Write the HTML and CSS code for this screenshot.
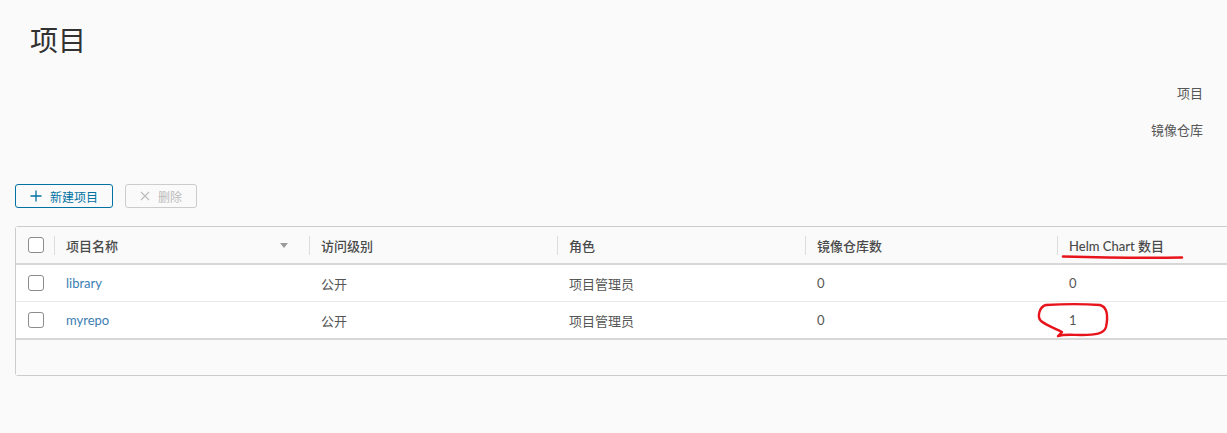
FILE: index.html
```html
<!DOCTYPE html>
<html lang="zh-CN">
<head>
<meta charset="utf-8">
<title>项目</title>
<link rel="stylesheet" href="styles.css">
</head>
<body>
<div class="page">
  <h1 class="title">项目</h1>
  <div class="side-links">
    <span class="side-link">项目</span>
    <span class="side-link">镜像仓库</span>
  </div>
  <div class="toolbar">
    <button class="btn btn-primary">
      <svg class="btn-icon" width="12" height="12" viewBox="0 0 12 12"><path d="M6 0.5V11.5M0.5 6H11.5" stroke="#0072a3" stroke-width="1.3" fill="none"/></svg>
      新建项目
    </button>
    <button class="btn btn-disabled">
      <svg class="btn-icon" width="10" height="10" viewBox="0 0 10 10"><path d="M1 1L9 9M9 1L1 9" stroke="#bbb" stroke-width="1.1" fill="none"/></svg>
      删除
    </button>
  </div>
  <div class="grid-clip">
    <div class="datagrid">
      <div class="row head">
        <div class="cell chk"><span class="checkbox"></span></div>
        <div class="cell hcell sep">项目名称<span class="filter"></span></div>
        <div class="cell hcell sep">访问级别</div>
        <div class="cell hcell sep">角色</div>
        <div class="cell hcell sep">镜像仓库数</div>
        <div class="cell hcell sep">Helm Chart 数目</div>
      </div>
      <div class="row">
        <div class="cell chk"><span class="checkbox"></span></div>
        <div class="cell"><a class="link">library</a></div>
        <div class="cell">公开</div>
        <div class="cell">项目管理员</div>
        <div class="cell">0</div>
        <div class="cell">0</div>
      </div>
      <div class="row last">
        <div class="cell chk"><span class="checkbox"></span></div>
        <div class="cell"><a class="link">myrepo</a></div>
        <div class="cell">公开</div>
        <div class="cell">项目管理员</div>
        <div class="cell">0</div>
        <div class="cell">1</div>
      </div>
      <div class="footer"></div>
    </div>
  </div>
</div>
<svg class="marks" width="1227" height="433" viewBox="0 0 1227 433">
  <path d="M1063 256.5 C1100 257.5 1150 258 1182 257.5" stroke="#e8141b" stroke-width="2.6" fill="none" stroke-linecap="round"/>
  <path d="M1046 305 C1062 304 1086 304 1100 305 C1108 307 1108 318 1106 327 C1104 334 1095 335 1082 335 C1072 335 1064 334 1058 336 L1062 332 C1056 329 1046 325 1041 321 C1037 317 1039 307 1046 305 Z" stroke="#e8141b" stroke-width="2.4" fill="none" stroke-linejoin="round"/>
</svg>
</body>
</html>
```
FILE: styles.css
```css
html, body {
  margin: 0;
  padding: 0;
  background: #fafafa;
  overflow: hidden;
  width: 1227px;
  height: 433px;
}
body {
  font-family: "Lato", "Noto Sans CJK SC", sans-serif;
  color: #565656;
  position: relative;
}
.page {
  padding: 0 0 0 15px;
}
.title {
  margin: 0;
  padding: 21px 0 0 15px;
  font-size: 28px;
  line-height: 38px;
  font-weight: 400;
  color: #313131;
}
.side-links {
  display: flex;
  flex-direction: column;
  align-items: flex-end;
  padding-right: 24px;
  margin-top: 25px;
  gap: 18px;
}
.side-link {
  font-size: 13px;
  line-height: 19px;
  color: #565656;
}
.toolbar {
  display: flex;
  gap: 12px;
  margin-top: 44px;
}
.btn {
  height: 24px;
  box-sizing: border-box;
  display: flex;
  align-items: center;
  gap: 8px;
  font-family: inherit;
  font-size: 12px;
  background: transparent;
  border-radius: 3px;
  padding: 0 0 0 14px;
}
.btn-primary {
  width: 98px;
  border: 1px solid #0072a3;
  color: #0072a3;
}
.btn-disabled {
  width: 72px;
  border: 1px solid #ccc;
  color: #bbb;
}
.btn-icon { flex: none; }
.grid-clip {
  margin-top: 18px;
  overflow: hidden;
  width: 1212px;
}
.datagrid {
  width: 1330px;
  border: 1px solid #ccc;
  border-radius: 3px;
  background: #fff;
}
.row {
  display: grid;
  grid-template-columns: 38px 255px 248px 248px 252px 1fr;
  height: 36px;
  border-bottom: 1px solid #e8e8e8;
  font-size: 13px;
}
.row.head {
  background: #fafafa;
  border-bottom: 2px solid #d7d7d7;
  font-weight: 500;
  color: #4a4a4a;
}
.row.last {
  border-bottom: 2px solid #d7d7d7;
}
.cell {
  display: flex;
  align-items: center;
  padding-left: 12px;
  position: relative;
}
.hcell.sep::before {
  content: "";
  position: absolute;
  left: 0;
  top: 9px;
  bottom: 8px;
  border-left: 1px solid #ddd;
}
.checkbox {
  width: 14px;
  height: 14px;
  border: 1px solid #8c8c8c;
  border-radius: 3px;
  background: #fff;
  display: block;
}
.filter {
  position: absolute;
  right: 21px;
  top: 16px;
  width: 0;
  height: 0;
  border-left: 4px solid transparent;
  border-right: 4px solid transparent;
  border-top: 5px solid #9a9a9a;
}
.link {
  color: #3b7db3;
}
.footer {
  height: 35px;
  background: #fafafa;
}
.marks {
  position: absolute;
  left: 0;
  top: 0;
  pointer-events: none;
}
```
